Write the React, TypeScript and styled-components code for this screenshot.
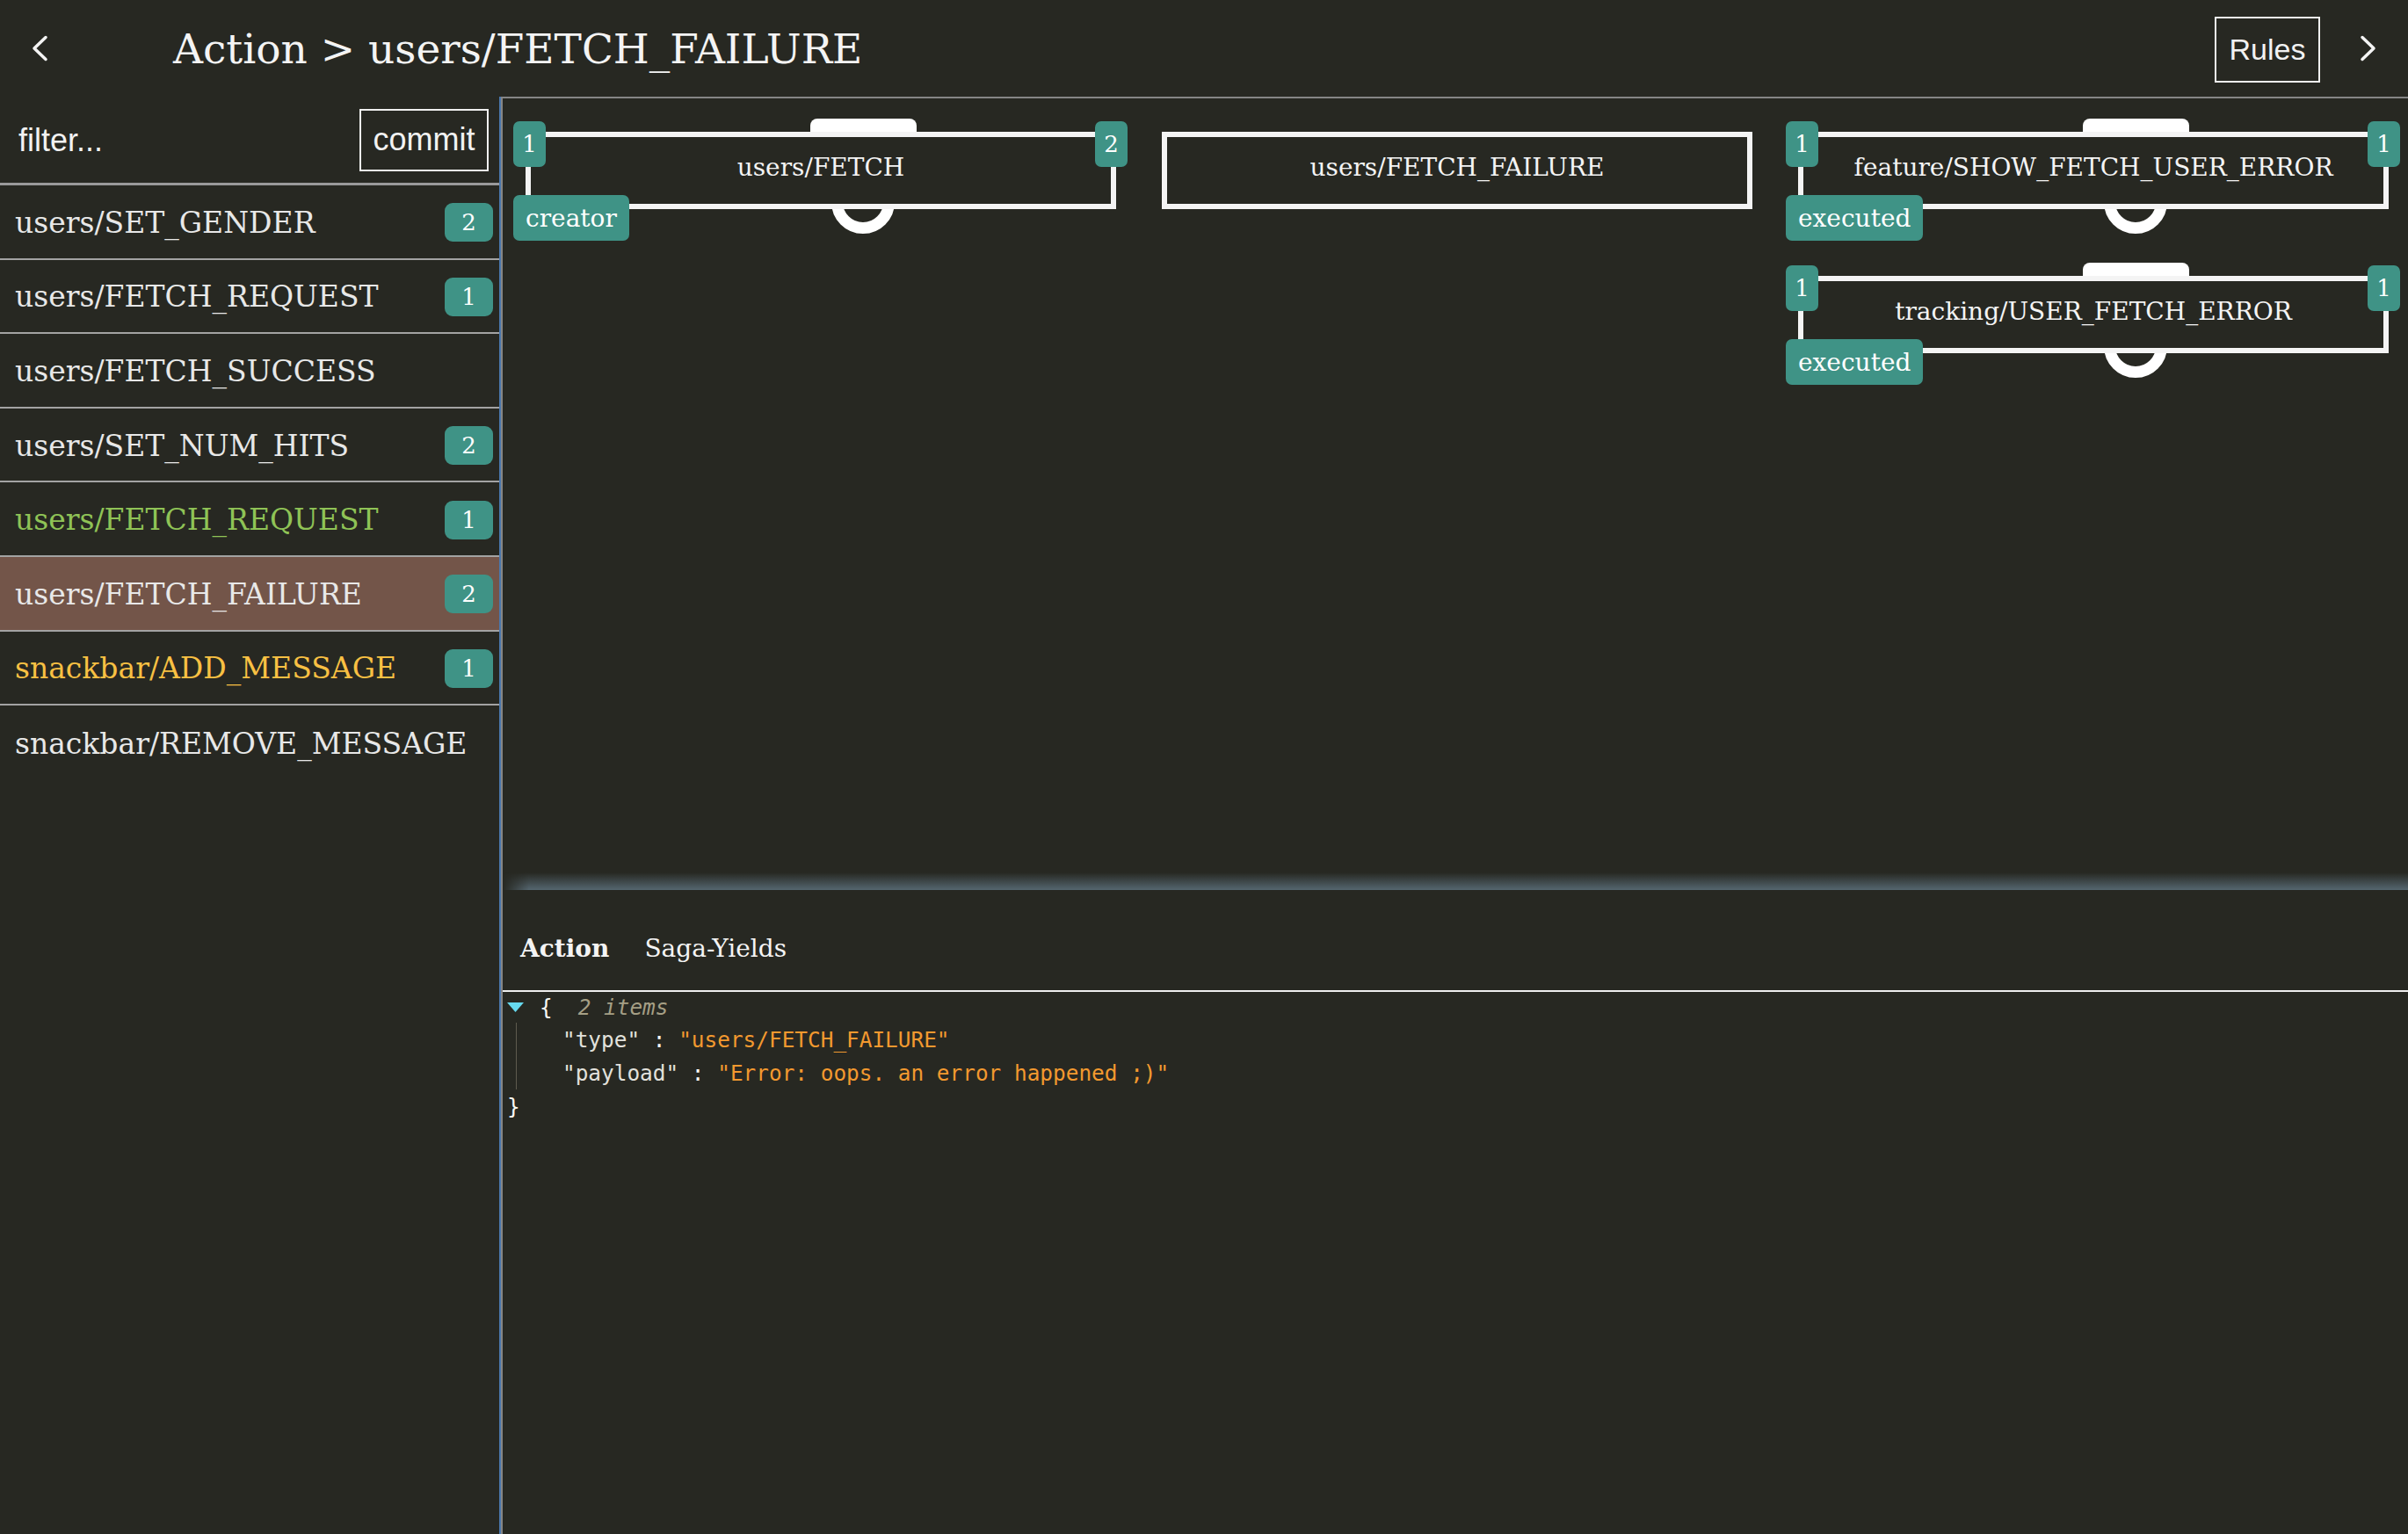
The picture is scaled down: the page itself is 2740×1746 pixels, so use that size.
import React from 'react';
import styled, { createGlobalStyle } from 'styled-components';

const GlobalStyle = createGlobalStyle`
  html, body {
    margin: 0;
    padding: 0;
    background: #272822;
  }
  * {
    box-sizing: border-box;
  }
`;

const serif = `"DejaVu Serif", "Liberation Serif", serif`;
const sans = `"Liberation Sans", Arial, sans-serif`;
const mono = `"DejaVu Sans Mono", "Liberation Mono", monospace`;

const Page = styled.div`
  display: flex;
  flex-direction: column;
  width: 100vw;
  height: 100vh;
  background: #272822;
  color: #f2f2f2;
  overflow: hidden;
`;

const Header = styled.header`
  display: flex;
  align-items: center;
  height: 110px;
  flex-shrink: 0;
  padding: 0 36px 0 36px;
`;

const NavIcon = styled.svg`
  display: block;
  width: 20px;
  height: 30px;
  flex-shrink: 0;
`;

const Title = styled.h1`
  margin: 0 0 0 141px;
  font-family: ${serif};
  font-weight: normal;
  font-size: 47px;
  color: #f4f4f4;
  white-space: nowrap;
`;

const Spacer = styled.div`
  flex: 1;
`;

const OutlineButton = styled.button`
  background: transparent;
  color: #f2f2f2;
  border: 2px solid #f0f0f0;
  font-family: ${sans};
  padding: 0;
  cursor: pointer;
`;

const RulesButton = styled(OutlineButton)`
  width: 120px;
  height: 75px;
  font-size: 34px;
  margin-right: 44px;
  margin-top: 2px;
`;

const Body = styled.div`
  display: flex;
  flex: 1;
  min-height: 0;
`;

const Sidebar = styled.aside`
  width: 570px;
  flex-shrink: 0;
  border-right: 2px solid #4a77ad;
  display: flex;
  flex-direction: column;
`;

const FilterRow = styled.div`
  display: flex;
  align-items: center;
  height: 101px;
  padding: 0 12px 0 21px;
  border-bottom: 3px solid #9a9a9a;
`;

const FilterInput = styled.input`
  flex: 1;
  min-width: 0;
  background: transparent;
  border: none;
  outline: none;
  font-family: ${sans};
  font-size: 36px;
  color: #f2f2f2;
  padding: 0;
  margin-top: 2px;
  &::placeholder {
    color: #f2f2f2;
    opacity: 1;
  }
`;

const CommitButton = styled(OutlineButton)`
  width: 147px;
  height: 71px;
  font-size: 36px;
`;

const ActionRow = styled.div<{ $tone: 'plain' | 'green' | 'yellow'; $selected?: boolean }>`
  display: flex;
  align-items: center;
  height: 84.6px;
  padding: 2px 7px 0 17px;
  border-bottom: 2px solid #a3a3a3;
  background: ${p => (p.$selected ? '#735549' : 'transparent')};
  color: ${p => (p.$tone === 'green' ? '#8fc356' : p.$tone === 'yellow' ? '#f8c043' : '#e8e8e8')};
  font-family: ${serif};
  font-size: 33px;
  white-space: nowrap;
  &:last-child {
    border-bottom: none;
  }
`;

const RowLabel = styled.span`
  flex: 1;
`;

const CountBadge = styled.span`
  display: flex;
  align-items: center;
  justify-content: center;
  width: 55px;
  height: 44px;
  border-radius: 9px;
  background: #3f9386;
  color: #ffffff;
  font-family: ${serif};
  font-size: 26px;
`;

const Main = styled.main`
  flex: 1;
  display: flex;
  flex-direction: column;
  border-left: 2px solid #858585;
  min-width: 0;
`;

const Graph = styled.section`
  position: relative;
  flex: 0 0 903px;
  border-top: 2px solid #858585;
  display: flex;
  gap: 52px;
  padding: 38px 0 0 26px;
`;

const Glow = styled.div`
  position: absolute;
  left: 0;
  right: 0;
  bottom: 0;
  height: 20px;
  background: linear-gradient(to bottom, rgba(93, 113, 125, 0), rgba(93, 113, 125, 0.85));
  -webkit-mask-image: linear-gradient(to right, transparent 0, #000 30px);
  mask-image: linear-gradient(to right, transparent 0, #000 30px);
  pointer-events: none;
`;

const NodeColumn = styled.div`
  display: flex;
  flex-direction: column;
  gap: 76px;
`;

const NodeWrap = styled.div`
  position: relative;
  isolation: isolate;
  width: 672px;
  height: 88px;
`;

const NodeBox = styled.div`
  position: relative;
  z-index: 1;
  width: 100%;
  height: 100%;
  border: 6px solid #f4f4f4;
  background: #272822;
  display: flex;
  align-items: center;
  justify-content: center;
  padding-bottom: 8px;
  font-family: ${serif};
  font-size: 28px;
  color: #f4f4f4;
  white-space: nowrap;
`;

const NodeTab = styled.div`
  position: absolute;
  z-index: 0;
  left: 324px;
  top: -15px;
  width: 121px;
  height: 20px;
  background: #ffffff;
  border-radius: 8px 8px 0 0;
`;

const NodeRing = styled.div`
  position: absolute;
  z-index: 0;
  left: 348px;
  top: 44px;
  width: 72px;
  height: 72px;
  border: 13px solid #ffffff;
  border-radius: 50%;
`;

const NodeBadge = styled.span<{ $side: 'left' | 'right' }>`
  position: absolute;
  z-index: 2;
  top: -12px;
  ${p => (p.$side === 'left' ? 'left: -14px;' : 'right: -13px;')}
  width: 37px;
  height: 52px;
  border-radius: 7px;
  background: #3f9386;
  color: #ffffff;
  display: flex;
  align-items: center;
  justify-content: center;
  font-family: ${serif};
  font-size: 26px;
`;

const NodeStatus = styled.span`
  position: absolute;
  z-index: 2;
  left: -14px;
  top: 72px;
  height: 52px;
  padding: 0 14px;
  border-radius: 7px;
  background: #3f9386;
  color: #ffffff;
  display: flex;
  align-items: center;
  font-family: ${serif};
  font-size: 28px;
`;

const Inspector = styled.section`
  flex: 1;
  display: flex;
  flex-direction: column;
  min-height: 0;
`;

const TabBar = styled.nav`
  display: flex;
  align-items: center;
  gap: 40px;
  height: 116px;
  padding: 18px 0 0 20px;
  border-bottom: 2px solid #eeeeee;
`;

const Tab = styled.span<{ $active?: boolean }>`
  font-family: ${serif};
  font-size: 28px;
  font-weight: ${p => (p.$active ? 'bold' : 'normal')};
  color: #f4f4f4;
`;

const JsonView = styled.div`
  font-family: ${mono};
  font-size: 24.4px;
  color: #f9f8f5;
  padding-left: 5px;
`;

const JsonHead = styled.div`
  display: flex;
  align-items: center;
  height: 35px;
`;

const Caret = styled.svg`
  width: 19px;
  height: 11px;
  margin-right: 18px;
`;

const Meta = styled.span`
  margin-left: 29px;
  font-style: italic;
  color: #a59f85;
`;

const JsonBody = styled.div`
  margin-left: 10px;
  border-left: 1px solid #5e5b4e;
  padding-left: 52px;
`;

const JsonLine = styled.div`
  height: 38px;
  display: flex;
  align-items: center;
  white-space: pre;
`;

const Key = styled.span`
  color: #e2e1dc;
`;

const StringValue = styled.span`
  color: #f3992f;
`;

const Brace = styled.div`
  height: 38px;
  display: flex;
  align-items: center;
`;

type Tone = 'plain' | 'green' | 'yellow';

const actions: { name: string; count?: number; tone: Tone; selected?: boolean }[] = [
  { name: 'users/SET_GENDER', count: 2, tone: 'plain' },
  { name: 'users/FETCH_REQUEST', count: 1, tone: 'plain' },
  { name: 'users/FETCH_SUCCESS', tone: 'plain' },
  { name: 'users/SET_NUM_HITS', count: 2, tone: 'plain' },
  { name: 'users/FETCH_REQUEST', count: 1, tone: 'green' },
  { name: 'users/FETCH_FAILURE', count: 2, tone: 'plain', selected: true },
  { name: 'snackbar/ADD_MESSAGE', count: 1, tone: 'yellow' },
  { name: 'snackbar/REMOVE_MESSAGE', tone: 'plain' },
];

interface SagaNodeProps {
  label: string;
  left?: number;
  right?: number;
  status?: string;
}

const SagaNode: React.FC<SagaNodeProps> = ({ label, left, right, status }) => (
  <NodeWrap>
    {status && <NodeTab />}
    {status && <NodeRing />}
    <NodeBox>{label}</NodeBox>
    {left !== undefined && <NodeBadge $side="left">{left}</NodeBadge>}
    {right !== undefined && <NodeBadge $side="right">{right}</NodeBadge>}
    {status && <NodeStatus>{status}</NodeStatus>}
  </NodeWrap>
);

const Chevron: React.FC<{ dir: 'left' | 'right' }> = ({ dir }) => (
  <NavIcon viewBox="0 0 20 30">
    <path
      d={dir === 'left' ? 'M16 2.5 L3 15 L16 27.5' : 'M4 2.5 L17 15 L4 27.5'}
      fill="none"
      stroke="#f4f4f4"
      strokeWidth="3.5"
      strokeLinecap="round"
      strokeLinejoin="round"
    />
  </NavIcon>
);

export default function App() {
  return (
    <>
      <GlobalStyle />
      <Page>
        <Header>
          <Chevron dir="left" />
          <Title>Action &gt; users/FETCH_FAILURE</Title>
          <Spacer />
          <RulesButton>Rules</RulesButton>
          <Chevron dir="right" />
        </Header>
        <Body>
          <Sidebar>
            <FilterRow>
              <FilterInput placeholder="filter..." />
              <CommitButton>commit</CommitButton>
            </FilterRow>
            {actions.map((a, i) => (
              <ActionRow key={i} $tone={a.tone} $selected={a.selected}>
                <RowLabel>{a.name}</RowLabel>
                {a.count !== undefined && <CountBadge>{a.count}</CountBadge>}
              </ActionRow>
            ))}
          </Sidebar>
          <Main>
            <Graph>
              <NodeColumn>
                <SagaNode label="users/FETCH" left={1} right={2} status="creator" />
              </NodeColumn>
              <NodeColumn>
                <SagaNode label="users/FETCH_FAILURE" />
              </NodeColumn>
              <NodeColumn>
                <SagaNode label="feature/SHOW_FETCH_USER_ERROR" left={1} right={1} status="executed" />
                <SagaNode label="tracking/USER_FETCH_ERROR" left={1} right={1} status="executed" />
              </NodeColumn>
              <Glow />
            </Graph>
            <Inspector>
              <TabBar>
                <Tab $active>Action</Tab>
                <Tab>Saga-Yields</Tab>
              </TabBar>
              <JsonView>
                <JsonHead>
                  <Caret viewBox="0 0 19 11">
                    <polygon points="0,0 19,0 9.5,11" fill="#66d9ef" />
                  </Caret>
                  <span>{'{'}</span>
                  <Meta>2 items</Meta>
                </JsonHead>
                <JsonBody>
                  <JsonLine>
                    <Key>"type"</Key>
                    <span> : </span>
                    <StringValue>"users/FETCH_FAILURE"</StringValue>
                  </JsonLine>
                  <JsonLine>
                    <Key>"payload"</Key>
                    <span> : </span>
                    <StringValue>"Error: oops. an error happened ;)"</StringValue>
                  </JsonLine>
                </JsonBody>
                <Brace>{'}'}</Brace>
              </JsonView>
            </Inspector>
          </Main>
        </Body>
      </Page>
    </>
  );
}
